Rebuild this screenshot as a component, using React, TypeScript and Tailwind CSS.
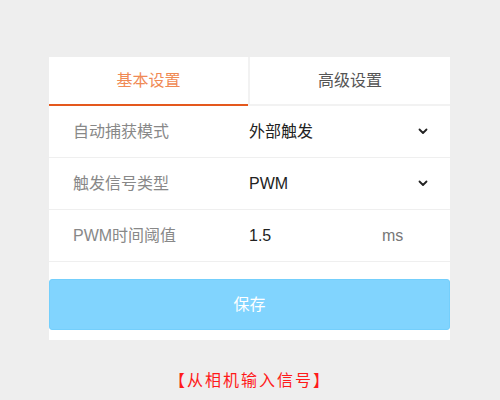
import React from "react";

function Chevron() {
  return (
    <svg width="10" height="7" viewBox="0 0 10 7" fill="none">
      <path d="M1.5 1.5 L5 5 L8.5 1.5" stroke="#222" strokeWidth="1.8" strokeLinecap="round" strokeLinejoin="round" />
    </svg>
  );
}

function Row({ label, value, right }: { label: string; value: string; right: React.ReactNode }) {
  return (
    <div className="flex h-[52px] items-center border-b border-[#efefef]">
      <div className="w-[200px] pl-[24px] text-[16px] text-[#888888]">{label}</div>
      <div className="w-[133px] text-[16px] text-[#222222]">{value}</div>
      <div className="flex flex-1 items-center text-[16px] text-[#777]">{right}</div>
    </div>
  );
}

export default function App() {
  return (
    <div
      className="w-[500px] h-[400px] bg-[#eeeeee] pt-[57px]"
      style={{ fontFamily: '"Liberation Sans", "Noto Sans CJK SC", sans-serif' }}
    >
      <div className="ml-[49px] w-[401px] bg-white pb-[10px]">
        <div className="flex h-[49px]">
          <div className="flex w-[199px] items-center justify-center border-b-2 border-[#e4581d] text-[16px] text-[#f08a55]">
            基本设置
          </div>
          <div className="w-[2px] bg-[#f2f2f2]" />
          <div className="flex flex-1 items-center justify-center border-b-2 border-[#f2f2f2] text-[16px] text-[#555555]">
            高级设置
          </div>
        </div>
        <Row label="自动捕获模式" value="外部触发" right={<span className="ml-[36px] flex"><Chevron /></span>} />
        <Row label="触发信号类型" value="PWM" right={<span className="ml-[36px] flex"><Chevron /></span>} />
        <Row label="PWM时间阈值" value="1.5" right={<span>ms</span>} />
        <div className="pt-[17px]">
          <button className="flex h-[51px] w-full items-center justify-center rounded-[3px] border border-[#74cffc] bg-[#81d4fe] text-[16px] text-white">
            保存
          </button>
        </div>
      </div>
      <div
        className="mt-[27px] text-center text-[16px] tracking-[2px] text-[#ff1a1a]"
        style={{ fontFamily: '"Noto Sans CJK SC", sans-serif' }}
      >
        【从相机输入信号】
      </div>
    </div>
  );
}
